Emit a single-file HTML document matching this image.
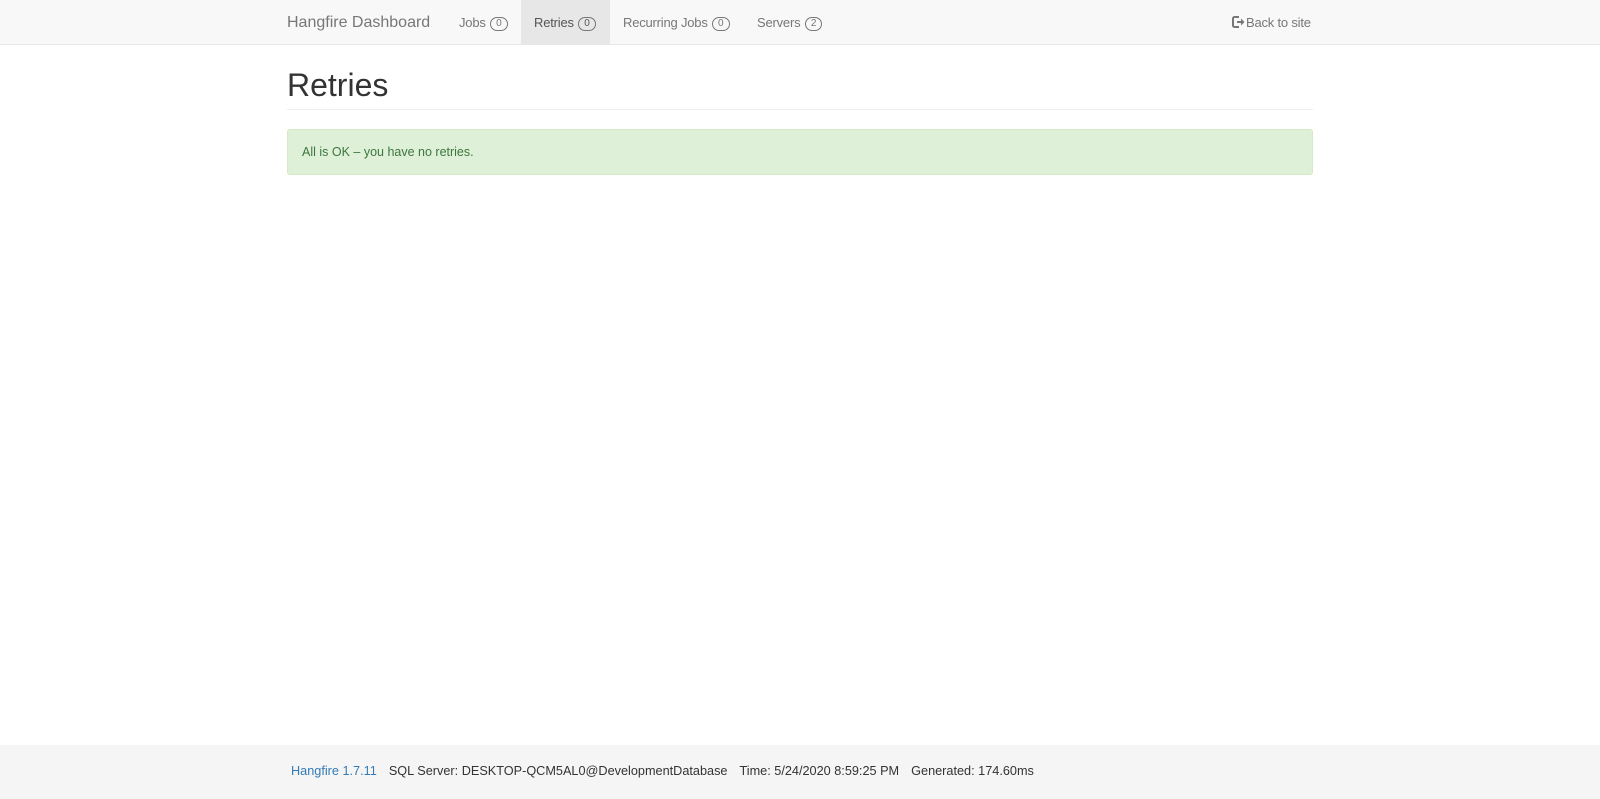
<!DOCTYPE html>
<html><head><meta charset="utf-8"><style>
*{box-sizing:border-box}
body{margin:0;width:1600px;height:799px;background:#fff;font-family:"Liberation Sans",Arial,sans-serif;color:#333;position:relative;overflow:hidden}
.nav{position:absolute;left:0;top:0;width:1600px;height:45px;background:#f8f8f8;border-bottom:1px solid #e7e7e7}
.brand{position:absolute;left:287px;top:14px;font-size:16px;color:#777}
.item{position:absolute;top:1px;height:44px;line-height:44px;font-size:13px;color:#777;padding:0 13px;white-space:nowrap;letter-spacing:-0.2px}
.item.active{top:0;padding-top:1px;background:#e7e7e7;color:#555}
.badge{display:inline-block;border:1px solid #777;border-radius:7px;font-size:10px;line-height:12px;padding:0 5px;margin-left:1px;vertical-align:1px;letter-spacing:0}
h1{position:absolute;left:287px;top:67px;margin:0;font-size:32px;font-weight:normal;color:#333}
.hr{position:absolute;left:287px;top:109px;width:1026px;border-top:1px solid #eee}
.alert{position:absolute;left:287px;top:129px;width:1026px;height:46px;background:#dff0d8;border:1px solid #d6e9c6;border-radius:3px;color:#3c763d;font-size:12.5px;padding:15px 14px}
.foot{position:absolute;left:0;top:745px;width:1600px;height:54px;background:#f5f5f5;font-size:12.7px;color:#333;line-height:26px;padding:13px 0 0 291px;white-space:nowrap}
.foot span{margin-right:12px}
</style></head><body>
<div class="nav">
<div class="brand">Hangfire Dashboard</div>
<div class="item" style="left:446px">Jobs <span class="badge">0</span></div>
<div class="item active" style="left:521px;width:89px">Retries <span class="badge">0</span></div>
<div class="item" style="left:610px">Recurring Jobs <span class="badge">0</span></div>
<div class="item" style="left:744px">Servers <span class="badge">2</span></div>
<div class="item" style="left:1219px"><svg width="13" height="12" viewBox="0 0 13 12" style="vertical-align:-1px;margin-right:1px"><path d="M7 1H2.5A1.5 1.5 0 0 0 1 2.5v7A1.5 1.5 0 0 0 2.5 11H7" fill="none" stroke="#777" stroke-width="2"/><path d="M5 5h4V2.5L12.5 6 9 9.5V7H5z" fill="#777"/></svg>Back to site</div>
</div>
<h1>Retries</h1>
<div class="hr"></div>
<div class="alert">All is OK – you have no retries.</div>
<div class="foot"><span style="color:#337ab7">Hangfire 1.7.11</span><span>SQL Server: DESKTOP-QCM5AL0@DevelopmentDatabase</span><span>Time: 5/24/2020 8:59:25 PM</span><span>Generated: 174.60ms</span></div>
</body></html>
